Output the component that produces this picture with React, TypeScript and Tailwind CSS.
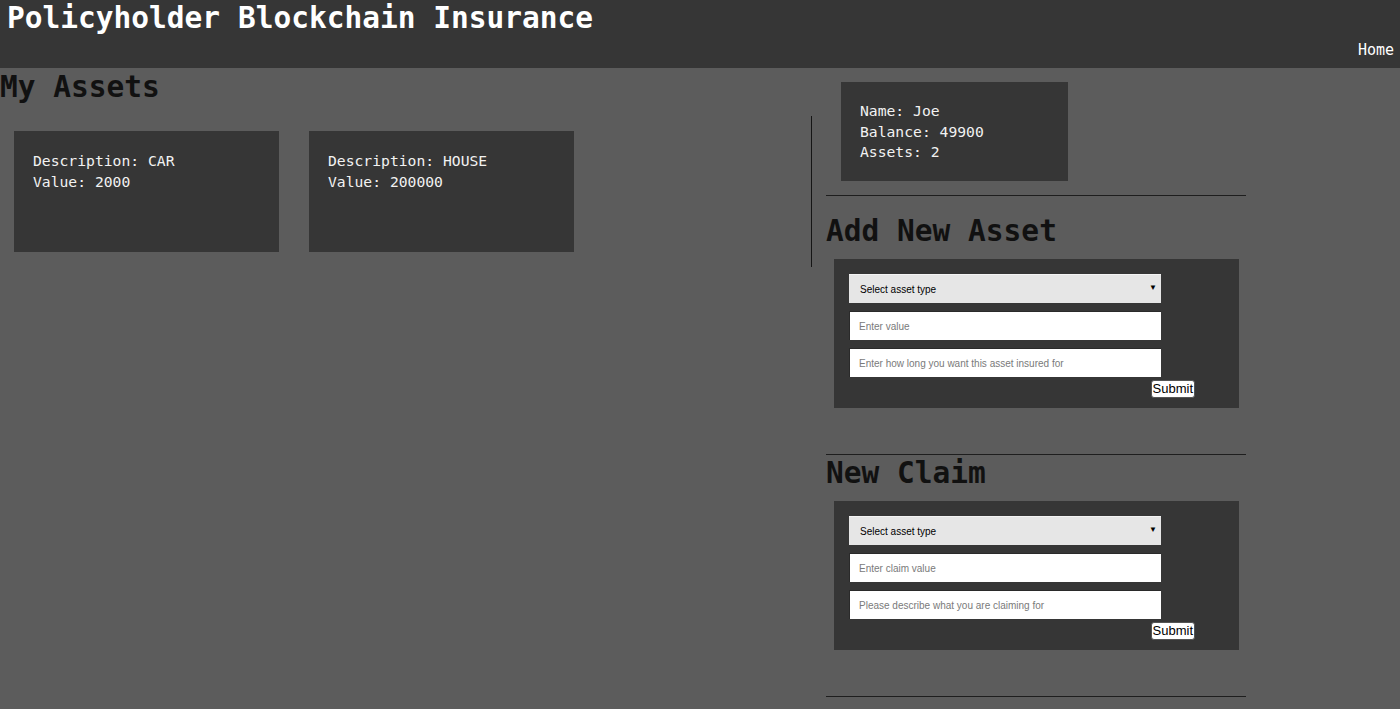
import React from "react";

const mono = { fontFamily: '"DejaVu Sans Mono", "Liberation Mono", monospace' };
const sans = { fontFamily: '"Liberation Sans", Arial, sans-serif' };

function AssetCard({ desc, value }: { desc: string; value: string }) {
  return (
    <div className="w-[265px] h-[121px] bg-[#363636] px-[19px] pt-[19px] text-[14.7px] leading-[21px] text-[#f2f2f2]">
      <div>Description: {desc}</div>
      <div>Value: {value}</div>
    </div>
  );
}

function FormBox({ p1, p2 }: { p1: string; p2: string }) {
  return (
    <div className="ml-[8px] w-[405px] bg-[#363636] pl-[15px] pt-[15px] pb-[10px]" style={sans}>
      <div className="w-[346px] flex flex-col">
        <div className="relative w-[312px] h-[29px]">
          <select
            className="appearance-none w-full h-full bg-[#e6e6e6] border-t border-[#f4f4f4] pl-[11px] text-[10px] text-black outline-none"
            style={sans}
            defaultValue=""
          >
            <option value="">Select asset type</option>
            <option value="car">CAR</option>
            <option value="house">HOUSE</option>
          </select>
          <span className="pointer-events-none absolute right-[4px] top-[10px] text-[8px] text-black leading-none">▼</span>
        </div>
        <input
          className="mt-[8px] w-[312px] h-[29px] bg-white border-t border-l border-[#2a2a2a] pl-[9px] text-[10px] text-black placeholder:text-[#7a7a7a] outline-none"
          style={sans}
          placeholder={p1}
        />
        <input
          className="mt-[8px] w-[312px] h-[29px] bg-white border-t border-l border-[#2a2a2a] pl-[9px] text-[10px] text-black placeholder:text-[#7a7a7a] outline-none"
          style={sans}
          placeholder={p2}
        />
        <button
          className="self-end mt-[3px] h-[18px] px-[1px] bg-white text-black text-[13px] leading-[16px] rounded-[3px] border border-[#555]"
          style={sans}
        >
          Submit
        </button>
      </div>
    </div>
  );
}

export default function App() {
  return (
    <div className="min-h-[709px] bg-[#5c5c5c]" style={mono}>
      <header className="h-[68px] bg-[#363636] flex flex-col">
        <h1 className="pl-[7px] pt-[1px] text-[29.5px] leading-[35px] font-bold text-white">
          Policyholder Blockchain Insurance
        </h1>
        <div className="flex justify-end pr-[6px] mt-[5px]">
          <a className="text-[15px] leading-[18px] text-white">Home</a>
        </div>
      </header>
      <div className="flex">
        <div className="w-[811px]">
          <h2 className="mt-[2px] text-[29.5px] leading-[34px] font-bold text-[#111]">My Assets</h2>
          <div className="mt-[27px] pl-[14px] flex gap-[30px]">
            <AssetCard desc="CAR" value="2000" />
            <AssetCard desc="HOUSE" value="200000" />
          </div>
        </div>
        <div className="w-px h-[151px] mt-[48px] bg-[#151515]" />
        <div className="ml-[14px] w-[420px]">
          <div className="ml-[15px] mt-[14px] w-[227px] h-[99px] bg-[#363636] px-[19px] pt-[19px] text-[14.7px] leading-[20.5px] text-[#f2f2f2]">
            <div>Name: Joe</div>
            <div>Balance: 49900</div>
            <div>Assets: 2</div>
          </div>
          <div className="mt-[14px] h-px bg-[#1e1e1e]" />
          <h2 className="mt-[18px] text-[29.5px] leading-[34px] font-bold text-[#111]">Add New Asset</h2>
          <div className="mt-[11px]">
            <FormBox p1="Enter value" p2="Enter how long you want this asset insured for" />
          </div>
          <div className="mt-[46px] h-px bg-[#1e1e1e]" />
          <h2 className="mt-[1px] text-[29.5px] leading-[34px] font-bold text-[#111]">New Claim</h2>
          <div className="mt-[11px]">
            <FormBox p1="Enter claim value" p2="Please describe what you are claiming for" />
          </div>
          <div className="mt-[46px] h-px bg-[#1e1e1e]" />
        </div>
      </div>
    </div>
  );
}
